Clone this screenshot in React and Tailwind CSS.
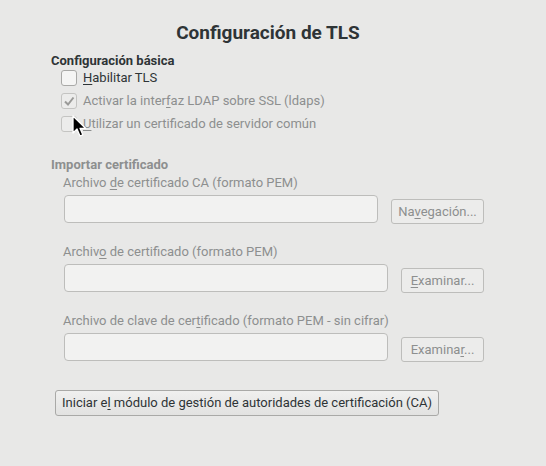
import React from "react";

function U({ children }) {
  return <span className="underline underline-offset-2 decoration-1">{children}</span>;
}

function Check({ checked, disabled, label, cursor }) {
  return (
    <div className="relative flex items-center h-[23px]">
      <div
        className={`w-[16px] h-[16px] rounded-[3px] border flex items-center justify-center ${
          disabled ? "border-[#c4c4c2] bg-[#ececeb]" : "border-[#a9a9a7] bg-[#f5f5f4]"
        }`}
      >
        {checked && (
          <svg width="12" height="12" viewBox="0 0 12 12">
            <path d="M2 6.5 L5 9.5 L10.5 2.5" fill="none" stroke="#9a9a98" strokeWidth="2" />
          </svg>
        )}
      </div>
      <span className={`ml-[6px] text-[13px] ${disabled ? "text-[#8d8f8f]" : "text-[#2e3436]"}`}>{label}</span>
      {cursor && (
        <svg className="absolute left-[11px] top-[3px]" width="15" height="23" viewBox="0 0 15 23">
          <path d="M1 1 L1 18 L5 14 L8 21 L10.8 19.8 L8 13.3 L13.5 13.3 Z" fill="#000" stroke="#fff" strokeWidth="1.3" strokeLinejoin="round" />
        </svg>
      )}
    </div>
  );
}

function FileRow({ label, button, inputW, btnW, gap }) {
  return (
    <div className="flex flex-col">
      <div className="pl-[12px] text-[13px] text-[#8d8f8f] h-[18px] leading-[18px]">{label}</div>
      <div className="flex items-start pl-[13px] mt-[3px]">
        <div className={`${inputW} h-[28px] rounded-[4px] border border-[#bdbdbb] bg-[#f2f2f1]`} />
        <div
          className={`${gap} ${btnW} mt-[4px] h-[25px] rounded-[3px] border border-[#bdbdbb] bg-[#ececeb] text-[13px] text-[#8d8f8f] flex items-center justify-center`}
        >
          <span>{button}</span>
        </div>
      </div>
    </div>
  );
}

export default function App() {
  return (
    <div
      className="w-[546px] h-[466px] bg-[#e8e8e7] overflow-hidden"
      style={{ fontFamily: "Roboto, 'Liberation Sans', sans-serif" }}
    >
      <div className="pt-[21px] text-center text-[19px] font-bold text-[#2e3436] leading-[24px]">
        <span className="relative left-[-5px]">Configuración de TLS</span>
      </div>
      <div className="pl-[51px] mt-[8px]">
        <div className="text-[13px] font-bold text-[#2e3436] leading-[16px]">Configuración básica</div>
        <div className="pl-[10px] mt-[-3px] flex flex-col">
          <Check label={<><U>H</U>abilitar TLS</>} />
          <Check checked disabled label={<>Activar la inter<U>f</U>az LDAP sobre SSL (ldaps)</>} />
          <Check disabled cursor label={<><U>U</U>tilizar un certificado de servidor común</>} />
        </div>
        <div className="mt-[22px] text-[13px] font-bold text-[#8d8f8f] leading-[16px]">Importar certificado</div>
        <div className="mt-[1px] flex flex-col gap-[19px]">
          <FileRow label={<>Archivo <U>d</U>e certificado CA (formato PEM)</>} button={<>Na<U>v</U>egación...</>} inputW="w-[314px]" btnW="w-[93px]" gap="ml-[13px]" />
          <FileRow label={<>Archiv<U>o</U> de certificado (formato PEM)</>} button={<><U>E</U>xaminar...</>} inputW="w-[324px]" btnW="w-[83px]" gap="ml-[13px]" />
          <FileRow label={<>Archivo de clave de cer<U>t</U>ificado (formato PEM - sin cifrar)</>} button={<>Examina<U>r</U>...</>} inputW="w-[324px]" btnW="w-[83px]" gap="ml-[13px]" />
        </div>
        <div className="mt-[28px] ml-[4px] inline-flex h-[26px] items-center px-[6px] rounded-[3px] border border-[#a9a9a7] bg-gradient-to-b from-[#f0f0ef] to-[#e2e2e1] text-[13px] text-[#2e3436]">
          <span>Iniciar e<U>l</U> módulo de gestión de autoridades de certificación (CA)</span>
        </div>
      </div>
    </div>
  );
}
